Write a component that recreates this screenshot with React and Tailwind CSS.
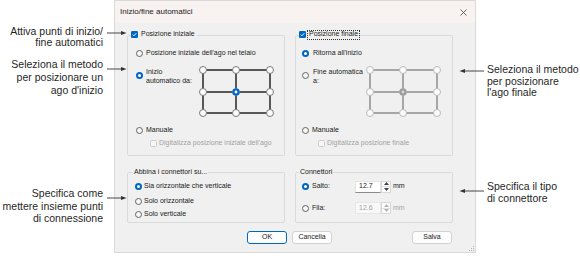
import React from "react";

function Radio({ checked }) {
  if (checked) {
    return (
      <span className="w-[7px] h-[7px] rounded-full bg-[#0067c0] flex items-center justify-center shrink-0">
        <span className="w-[3px] h-[3px] rounded-full bg-white" />
      </span>
    );
  }
  return <span className="block w-[7px] h-[7px] rounded-full border border-[#626262] bg-[#f7f7f7] shrink-0" />;
}

function Check({ checked }) {
  if (checked) {
    return (
      <svg width="7" height="7" viewBox="0 0 7 7" className="shrink-0">
        <rect width="7" height="7" rx="1.3" fill="#0067c0" />
        <path d="M1.7 3.6 L2.9 4.8 L5.3 2.2" stroke="#fff" strokeWidth="0.9" fill="none" />
      </svg>
    );
  }
  return <span className="block w-[7px] h-[7px] rounded-[1.5px] border border-[#cdcdcd] bg-[#f6f6f6] shrink-0" />;
}

function PosGrid({ active }) {
  const xs = [4, 37, 71];
  const ys = [4, 26, 47];
  const line = active ? "#262626" : "#8e8e8e";
  const ring = active ? "#5c5c5c" : "#ababab";
  return (
    <svg width="76" height="52" viewBox="0 0 76 52" className="shrink-0 -mt-[0.5px]">
      {ys.map((y) => (
        <g key={"h" + y}>
          <line x1={xs[0] + 3.6} y1={y} x2={xs[1] - 3.6} y2={y} stroke={line} strokeWidth="1.5" />
          <line x1={xs[1] + 3.6} y1={y} x2={xs[2] - 3.6} y2={y} stroke={line} strokeWidth="1.5" />
        </g>
      ))}
      {xs.map((x) => (
        <g key={"v" + x}>
          <line x1={x} y1={ys[0] + 3.6} x2={x} y2={ys[1] - 3.6} stroke={line} strokeWidth="1.5" />
          <line x1={x} y1={ys[1] + 3.6} x2={x} y2={ys[2] - 3.6} stroke={line} strokeWidth="1.5" />
        </g>
      ))}
      {ys.map((y) =>
        xs.map((x) =>
          x === 37 && y === 26 ? null : (
            <circle key={x + "-" + y} cx={x} cy={y} r="3.5" fill="#fbfbfb" stroke={ring} strokeWidth="0.8" />
          )
        )
      )}
      <circle cx="37" cy="26" r="3.8" fill={active ? "#0067c0" : "#9c9c9c"} />
      <circle cx="37" cy="26" r="1.4" fill={active ? "#ffffff" : "#d6d6d6"} />
    </svg>
  );
}

function Spin({ value, disabled }) {
  const tri = disabled ? "#b5b5b5" : "#404040";
  return (
    <div className="flex h-[12px]">
      <div
        className={
          disabled
            ? "w-[26px] h-full bg-[#f8f8f8] border border-[#e6e6e6] flex items-center pl-[3px] text-[#a3a3a3]"
            : "w-[26px] h-full bg-white border border-[#e4e4e4] border-b-[#8a8a8a] flex items-center pl-[3px] text-[#1a1a1a]"
        }
      >
        {value}
      </div>
      <div className="w-[10px] h-full flex flex-col border border-[#d8d8d8] bg-[#fbfbfb]">
        <div className="flex-1 flex items-center justify-center border-b border-[#e2e2e2]">
          <svg width="5" height="3" viewBox="0 0 5 3">
            <path d="M0 3 L2.5 0 L5 3 Z" fill={tri} />
          </svg>
        </div>
        <div className="flex-1 flex items-center justify-center">
          <svg width="5" height="3" viewBox="0 0 5 3">
            <path d="M0 0 L2.5 3 L5 0 Z" fill={tri} />
          </svg>
        </div>
      </div>
    </div>
  );
}

function ArrowRight() {
  return (
    <svg width="20" height="6" viewBox="0 0 20 6" className="shrink-0 block">
      <line x1="0" y1="3" x2="15" y2="3" stroke="#333" strokeWidth="0.9" />
      <path d="M14 1 L19.5 3 L14 5 Z" fill="#333" />
    </svg>
  );
}

function ArrowLeft() {
  return (
    <svg width="25" height="6" viewBox="0 0 25 6" className="shrink-0 block">
      <line x1="5" y1="3" x2="25" y2="3" stroke="#333" strokeWidth="0.9" />
      <path d="M6 1 L0.5 3 L6 5 Z" fill="#333" />
    </svg>
  );
}

function Button({ children, primary }) {
  return (
    <div
      className={
        primary
          ? "w-[40px] h-[13px] rounded-[3px] bg-[#fdfdfd] border border-[#0067c0] flex items-center justify-center"
          : "w-[40px] h-[13px] rounded-[3px] bg-[#fdfdfd] border border-[#d2d2d2] flex items-center justify-center"
      }
    >
      {children}
    </div>
  );
}

export default function App() {
  return (
    <div className="w-[580px] h-[267px] bg-white flex overflow-hidden font-['Liberation_Sans',Arial,sans-serif]">
      {/* left callouts */}
      <div className="w-[114px] shrink-0 flex flex-col pt-[26px] relative z-10 text-[10.5px] text-[#1f1f1f]">
        <div className="flex items-start">
          <div className="w-[103px] shrink-0 text-right leading-[11px] whitespace-nowrap">
            Attiva punti di inizio/<br />fine automatici
          </div>
          <div className="ml-[4px] mt-[4px] shrink-0"><ArrowRight /></div>
        </div>
        <div className="flex items-start mt-[9.5px]">
          <div className="w-[103px] shrink-0 text-right leading-[13px] whitespace-nowrap">
            Seleziona il metodo<br />per posizionare un<br />ago d'inizio
          </div>
          <div className="ml-[4px] mt-[8.5px] shrink-0"><ArrowRight /></div>
        </div>
        <div className="flex items-start mt-[90.5px]">
          <div className="w-[103px] shrink-0 text-right leading-[12.5px] whitespace-nowrap">
            Specifica come<br />mettere insieme punti<br />di connessione
          </div>
          <div className="ml-[4px] mt-[8px] shrink-0"><ArrowRight /></div>
        </div>
      </div>

      {/* dialog */}
      <div className="w-[362px] h-[253px] shrink-0 flex flex-col bg-[#f0f0f0] border border-[#dadada] relative text-[7px] text-[#1a1a1a]">
        <div className="h-[22px] shrink-0 bg-[#f8f2f1] flex items-center justify-between pl-[5px] pr-[8px]">
          <span className="text-[8px] text-[#1b1b1b]">Inizio/fine automatici</span>
          <svg width="7" height="7" viewBox="0 0 7 7">
            <path d="M0.5 0.5 L6.5 6.5 M6.5 0.5 L0.5 6.5" stroke="#404040" strokeWidth="0.8" />
          </svg>
        </div>

        <div className="flex-1 pt-[12px] pl-[12px] flex flex-col">
          <div className="flex gap-[10px]">
            {/* start position */}
            <div className="w-[158px] h-[121px] border border-[#dadada] rounded-[2px] flex flex-col">
              <div className="-mt-[6px] ml-[3px] h-[9px] w-fit pr-[2px] bg-[#f0f0f0] flex items-center gap-[3px]">
                <Check checked />
                <span>Posizione iniziale</span>
              </div>
              <div className="mt-[9.5px] h-[9px] pl-[8px] flex items-center gap-[3px]">
                <Radio />
                <span className="whitespace-nowrap">Posizione iniziale dell'ago nel telaio</span>
              </div>
              <div className="mt-[9px] pl-[8px] flex items-start">
                <div className="mt-[5px]"><Radio checked /></div>
                <div className="ml-[3px] w-[53px] leading-[9px] whitespace-nowrap">
                  Inizio<br />automatico da:
                </div>
                <PosGrid active />
              </div>
              <div className="mt-[7.5px] h-[9px] pl-[8px] flex items-center gap-[3px]">
                <Radio />
                <span>Manuale</span>
              </div>
              <div className="mt-[4.5px] h-[9px] pl-[22px] flex items-center gap-[2px] text-[#a2a2a2]">
                <Check />
                <span className="whitespace-nowrap">Digitalizza posizione iniziale dell'ago</span>
              </div>
            </div>

            {/* end position */}
            <div className="w-[158px] h-[121px] border border-[#dadada] rounded-[2px] flex flex-col">
              <div className="-mt-[7px] ml-[3px] h-[11px] w-fit bg-[#f0f0f0] flex items-center gap-[1px]">
                <Check checked />
                <span className="h-[10px] px-[1px] border border-dotted border-[#333] flex items-center">Posizione finale</span>
              </div>
              <div className="mt-[8.5px] h-[9px] pl-[6px] flex items-center gap-[4px]">
                <Radio checked />
                <span>Ritorna all'inizio</span>
              </div>
              <div className="mt-[9px] pl-[6px] flex items-start">
                <div className="mt-[5px]"><Radio /></div>
                <div className="ml-[4px] w-[53px] leading-[9px] whitespace-nowrap">
                  Fine automatica<br />a:
                </div>
                <PosGrid />
              </div>
              <div className="mt-[7.5px] h-[9px] pl-[6px] flex items-center gap-[3px]">
                <Radio />
                <span>Manuale</span>
              </div>
              <div className="mt-[4.5px] h-[9px] pl-[22px] flex items-center gap-[2px] text-[#a2a2a2]">
                <Check />
                <span className="whitespace-nowrap">Digitalizza posizione finale</span>
              </div>
            </div>
          </div>

          <div className="mt-[16px] flex gap-[10px]">
            {/* connectors join */}
            <div className="w-[158px] h-[51px] border border-[#dadada] rounded-[2px] flex flex-col">
              <div className="-mt-[6px] ml-[5px] h-[10px] w-fit px-[1px] bg-[#f0f0f0] flex items-center">
                Abbina i connettori su...
              </div>
              <div className="mt-[4.5px] h-[9px] pl-[7px] flex items-center gap-[2px]">
                <Radio checked />
                <span>Sia orizzontale che verticale</span>
              </div>
              <div className="mt-[6px] h-[9px] pl-[7px] flex items-center gap-[2px]">
                <Radio />
                <span>Solo orizzontale</span>
              </div>
              <div className="mt-[4px] h-[9px] pl-[7px] flex items-center gap-[2px]">
                <Radio />
                <span>Solo verticale</span>
              </div>
            </div>

            {/* connectors */}
            <div className="w-[158px] h-[51px] border border-[#dadada] rounded-[2px] flex flex-col">
              <div className="-mt-[6px] ml-[3px] h-[10px] w-fit px-[1px] bg-[#f0f0f0] flex items-center">
                Connettori
              </div>
              <div className="mt-[3.5px] h-[12px] pl-[6px] flex items-center">
                <Radio checked />
                <span className="ml-[3px] w-[43px]">Salto:</span>
                <Spin value="12.7" />
                <span className="ml-[2px]">mm</span>
              </div>
              <div className="mt-[9.5px] h-[12px] pl-[6px] flex items-center">
                <Radio />
                <span className="ml-[3px] w-[43px]">Fila:</span>
                <Spin value="12.6" disabled />
                <span className="ml-[2px] text-[#a3a3a3]">mm</span>
              </div>
            </div>
          </div>

          <div className="mt-[8px] w-[326px] flex">
            <div className="ml-[120px]"><Button primary>OK</Button></div>
            <div className="ml-[5px]"><Button>Cancella</Button></div>
            <div className="ml-auto mr-[1px]"><Button>Salva</Button></div>
          </div>
        </div>

        <svg width="5" height="5" viewBox="0 0 5 5" className="absolute right-[1px] bottom-[1px]">
          <rect x="4" y="0" width="1" height="1" fill="#b0b0b0" />
          <rect x="2" y="2" width="1" height="1" fill="#b0b0b0" />
          <rect x="4" y="2" width="1" height="1" fill="#b0b0b0" />
          <rect x="0" y="4" width="1" height="1" fill="#b0b0b0" />
          <rect x="2" y="4" width="1" height="1" fill="#b0b0b0" />
          <rect x="4" y="4" width="1" height="1" fill="#b0b0b0" />
        </svg>
      </div>

      {/* right callouts */}
      <div className="flex-1 flex flex-col pt-[64px] relative z-10 text-[10.5px] text-[#1f1f1f]">
        <div className="flex items-start">
          <div className="-ml-[17px] mt-[4px] shrink-0"><ArrowLeft /></div>
          <div className="ml-[3px] leading-[11.5px] whitespace-nowrap">
            Seleziona il metodo<br />per posizionare<br />l'ago finale
          </div>
        </div>
        <div className="flex items-start mt-[81.5px]">
          <div className="-ml-[17px] mt-[8px] shrink-0"><ArrowLeft /></div>
          <div className="ml-[3px] leading-[12px] whitespace-nowrap">
            Specifica il tipo<br />di connettore
          </div>
        </div>
      </div>
    </div>
  );
}
